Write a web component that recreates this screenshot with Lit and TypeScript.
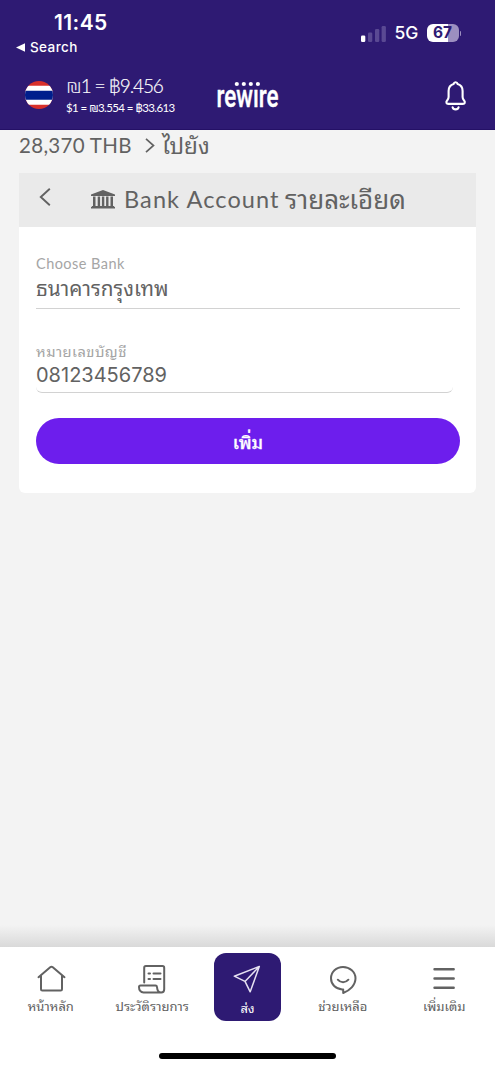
import { LitElement, html, css, svg } from "lit";
import { customElement, property } from "lit/decorators.js";

const base = css`
  :host { display: block; box-sizing: border-box; }
  * { box-sizing: border-box; }
  svg { display: block; flex: none; overflow: visible; }
  span { white-space: nowrap; }
`;

@customElement("app-header")
class AppHeader extends LitElement {
  static styles = [base, css`
    :host { background: #2e1a73; height: 130px; color: #fff; font-family: Inter, sans-serif; border-bottom: 1px solid #241066; }
    .status { display: flex; justify-content: space-between; height: 60px; padding: 11px 34px 0 16px; }
    .clock { display: block; font-size: 21px; font-weight: 600; line-height: 24px; padding-left: 38px; letter-spacing: 0.4px; }
    .back { display: flex; align-items: center; gap: 5px; font-size: 13.5px; font-weight: 500; line-height: 16px; margin-top: 4px; letter-spacing: 0.4px; }
    .signal { display: flex; align-items: center; height: 18px; margin-top: 13px; }
    .net { font-size: 17.5px; font-weight: 500; line-height: 20px; padding-left: 9px; width: 40px; }
    .batt { display: flex; justify-content: center; width: 32px; height: 18px; border-radius: 6px; background: linear-gradient(90deg, #fff 66%, #9c8fc0 66%); color: #2e1a73; font-size: 15.5px; font-weight: 700; line-height: 18px; margin-left: 1px; }
    .nub { width: 1.5px; height: 5px; border-radius: 0 2px 2px 0; background: #9c8fc0; margin-left: 1px; }
    .bar { display: grid; grid-template-columns: 41px 150px 1fr 24px; align-items: start; padding: 14px 27px 0 25px; }
    .flag { margin-top: 7px; }
    .rates { font-family: Lato, "DejaVu Sans", sans-serif; font-weight: 300; }
    .r1 { display: block; font-size: 19px; line-height: 24px; letter-spacing: -1.1px; -webkit-text-stroke: 0.2px #fff; }
    .r2 { display: block; font-size: 11.5px; line-height: 16px; margin-top: 2px; letter-spacing: -0.6px; font-weight: 400; }
    .word { font: 500 31px Roboto, sans-serif; }
    .bell { margin-top: 6px; }
  `];
  render() {
    return html`
      <div class="status">
        <div>
          <span class="clock">11:45</span>
          <div class="back">
            <svg width="9" height="9" viewBox="0 0 9 9"><path d="M0 4.5 9 .3v8.4z" fill="#fff"/></svg>
            <span>Search</span>
          </div>
        </div>
        <div class="signal">
          <svg width="25" height="17" viewBox="0 0 25 17">
            <rect x="0" y="10.5" width="4.3" height="6.5" rx="1.3" fill="#fff"/>
            <g fill="#5a4993"><rect x="7" y="7.5" width="4.3" height="9.5" rx="1.3"/><rect x="14" y="4" width="4.3" height="13" rx="1.3"/><rect x="20.6" y="1" width="4.3" height="16" rx="1.3"/></g>
          </svg>
          <span class="net">5G</span>
          <span class="batt">67</span><i class="nub"></i>
        </div>
      </div>
      <div class="bar">
        <svg class="flag" width="28" height="28" viewBox="0 0 28 28">
          <clipPath id="c"><circle cx="14" cy="14" r="14"/></clipPath>
          <g clip-path="url(#c)"><path fill="#d8302b" d="M0 0h28v28H0z"/><path fill="#fff" d="M0 4.7h28v19H0z"/><path fill="#001e8c" d="M0 9.7h28v9H0z"/></g>
        </svg>
        <div class="rates"><span class="r1">₪1 = ฿9.456</span><span class="r2">$1 = ₪3.554 = ฿33.613</span></div>
        <svg width="64" height="34" viewBox="0 0 64 34">
          <text class="word" x="0.5" y="32.8" textLength="62" lengthAdjust="spacingAndGlyphs" fill="#fff" stroke="#fff" stroke-width=".4">rewıre</text>
          <g fill="#fff"><circle cx="20.8" cy="10" r="2.1"/><circle cx="27.8" cy="10" r="2.1"/><circle cx="34.8" cy="10" r="2.1"/><circle cx="41.9" cy="10" r="2.1"/></g>
        </svg>
        <svg class="bell" width="24" height="32" viewBox="0 0 24 32" fill="none" stroke="#fff" stroke-width="2.1" stroke-linecap="round" stroke-linejoin="round">
          <path d="M11.600 2.200c-1 0-1.800.8-2 1.700-3 .9-5 3.600-5 7v6.200c0 1.300-.5 2.300-1.300 3.200-1.700 1.900-.9 3.600 1 3.600h14.600c1.900 0 2.700-1.700 1-3.600-.8-.9-1.300-1.900-1.300-3.200v-6.200c0-3.400-2-6.100-5-7-.2-.9-1-1.700-2-1.700z"/>
          <path d="M8.600 27.300c.6 2.700 5.400 2.700 6 0"/>
        </svg>
      </div>`;
  }
}

@customElement("bank-form")
class BankForm extends LitElement {
  static styles = [base, css`
    :host { padding: 0 19px; color: #626262; font-family: Lato, "Noto Sans Thai Looped", Loma, "Noto Sans Thai", "Noto Sans", sans-serif; }
    .crumb { display: flex; height: 43px; line-height: 31px; font-size: 20.5px; }
    .amount { width: 125.5px; letter-spacing: 0.3px; }
    .arrow { margin: 8px 7.5px 0 0; }
    .to { font-size: 22.5px; }
    .card { height: 320px; border-radius: 0 0 6px 6px; background: #fff; }
    .head { display: flex; height: 54px; background: #eaeaea; line-height: 52px; font-size: 23.5px; }
    .prev { margin: 15px 40px 0 20px; }
    .bank { margin: 16.5px 9px 0 0; }
    .en { width: 161px; letter-spacing: 1.1px; }
    .th { font-size: 26px; }
    .fields { padding: 28px 16px 0 17px; }
    .label { display: block; color: #a5a5a5; font-size: 14.5px; line-height: 18px; height: 18px; letter-spacing: 0.45px; }
    .value { display: block; height: 36px; border-bottom: 1.5px solid #d2d2d2; font-size: 20.7px; line-height: 31px; }
    .second { margin-top: 34px; font-size: 14.7px; line-height: 17px; }
    .number { height: 32px; width: 417px; border-bottom: 1.5px solid #d2d2d2; border-radius: 0 0 6px 6px; font-family: Inter, sans-serif; font-size: 20px; line-height: 28px; display: block; }
    .add { display: block; width: 424px; height: 46px; margin-top: 25px; border: 0; padding: 0; border-radius: 23px; background: #6d1eed; color: #fff; font: 500 18px/42px "Noto Sans Thai Looped", Loma, "Noto Sans Thai", sans-serif; -webkit-text-stroke: 0.3px #fff; }
  `];
  render() {
    return html`
      <div class="crumb">
        <span class="amount">28,370 THB</span>
        <svg class="arrow" width="10" height="15" viewBox="0 0 10 15" fill="none" stroke="#626262" stroke-width="1.7"><path d="m1 .8 7.500 6.700L1 14.200"/></svg>
        <span class="to">ไปยัง</span>
      </div>
      <div class="card">
        <div class="head">
          <svg class="prev" width="12" height="18" viewBox="0 0 12 18" fill="none" stroke="#626262" stroke-width="1.9"><path d="M10.800.8 1.800 9l9 8.200"/></svg>
          <svg class="bank" width="24" height="19" viewBox="0 0 24 19" fill="#626262"><path d="M12 0 24 4.500V6H0V4.500zM2 6.500h2.500V16H2zM6.700 6.500h2.400V16H6.700zM10.900 6.500h2.400V16h-2.400zM15.100 6.500h2.400V16h-2.400zM19.500 6.500H22V16h-2.500zM.8 16h22.400v1H24v1.500H0V17h.8z"/></svg>
          <span class="en">Bank Account</span><span class="th">รายละเอียด</span>
        </div>
        <div class="fields">
          <span class="label">Choose Bank</span>
          <span class="value">ธนาคารกรุงเทพ</span>
          <span class="label second">หมายเลขบัญชี</span>
          <span class="number">08123456789</span>
          <button class="add">เพิ่ม</button>
        </div>
      </div>`;
  }
}

const icons: Record<string, unknown> = {
  home: svg`<path d="M1.500 12.200 13.200 2.300c.8-.7 1.800-.7 2.600 0l11.700 9.900M4 11v13.200c0 .8.600 1.300 1.300 1.300h18.400c.7 0 1.300-.5 1.300-1.300V11"/>`,
  list: svg`<path d="M6.200 17.500V2.700c0-1 .7-1.700 1.700-1.700h16.600c1 0 1.700.7 1.700 1.700v21.600c0 1.800-1.200 3.200-3 3.200M23.200 27.500H5.500c-2.800 0-4.500-2.200-4.500-5.500 0-1 .5-1.500 1.500-1.500h15c1 0 1.400.5 1.500 1.500.2 3.300 1.700 5.500 4.200 5.500zM10.500 8.500h1.500M15.500 8.500h7M10.500 14h1.500M15.500 14h7"/>`,
  send: svg`<g stroke="#e6e1f2" stroke-width="1.5" transform="translate(-1.500)"><path d="M26.800 1.500 1.800 11.200l10.700 5.200 5.200 10.400zM12.500 16.400 26.800 1.500"/></g>`,
  chat: svg`<path d="M14 2C7.200 2 2 7 2 13.300c0 6.200 4.800 10.700 11.200 11.200l1 .1v3.400c6.400-2.500 12.300-7.800 12.300-14.700C26.500 7 20.800 2 14 2z"/><path d="M8.800 14.700c2.800 3.400 7.700 3.400 10.600 0"/>`,
  menu: svg`<path d="M4.500 4.300h19.200M4.500 13.500h19.200M4.500 22.700h19.200" stroke-width="2.400"/>`,
};

@customElement("nav-item")
class NavItem extends LitElement {
  @property() icon = "";
  @property() label = "";
  @property({ type: Boolean, reflect: true }) active = false;
  static styles = [base, css`
    :host { display: flex; flex-direction: column; align-items: center; width: 101.5px; height: 68px; padding-top: 12px; color: #606060; font: 13px/20px "Noto Sans Thai Looped", Loma, "Noto Sans Thai", "Noto Sans", sans-serif; }
    :host([active]) { width: 67px; margin: 0 11px; background: #2e1a73; border-radius: 12px; color: #fff; }
    span { margin-top: 3px; }
    :host([active]) span { margin-top: 5px; }
  `];
  render() {
    return html`<svg width="28" height="28" viewBox="0 0 28 28" fill="none" stroke="#626262" stroke-width="2" stroke-linecap="round" stroke-linejoin="round">${icons[this.icon]}</svg><span>${this.label}</span>`;
  }
}

@customElement("app-root")
class AppRoot extends LitElement {
  static styles = [base, css`
    :host { display: flex; flex-direction: column; width: 495px; height: 1070px; background: #f3f3f3; overflow: hidden; }
    main { flex: 1; }
    .shade { height: 22px; background: linear-gradient(#f3f3f3, #d9d9d9); }
    nav { background: #fff; height: 123px; padding-top: 6px; }
    .items { display: flex; justify-content: center; height: 100px; }
    .pill { width: 177px; height: 6px; border-radius: 3px; background: #000; margin: 0 auto; }
  `];
  render() {
    return html`
      <app-header></app-header>
      <main><bank-form></bank-form></main>
      <div class="shade"></div>
      <nav>
        <div class="items">
          <nav-item icon="home" label="หน้าหลัก"></nav-item>
          <nav-item icon="list" label="ประวัติรายการ"></nav-item>
          <nav-item icon="send" label="ส่ง" active></nav-item>
          <nav-item icon="chat" label="ช่วยเหลือ"></nav-item>
          <nav-item icon="menu" label="เพิ่มเติม"></nav-item>
        </div>
        <div class="pill"></div>
      </nav>`;
  }
}
